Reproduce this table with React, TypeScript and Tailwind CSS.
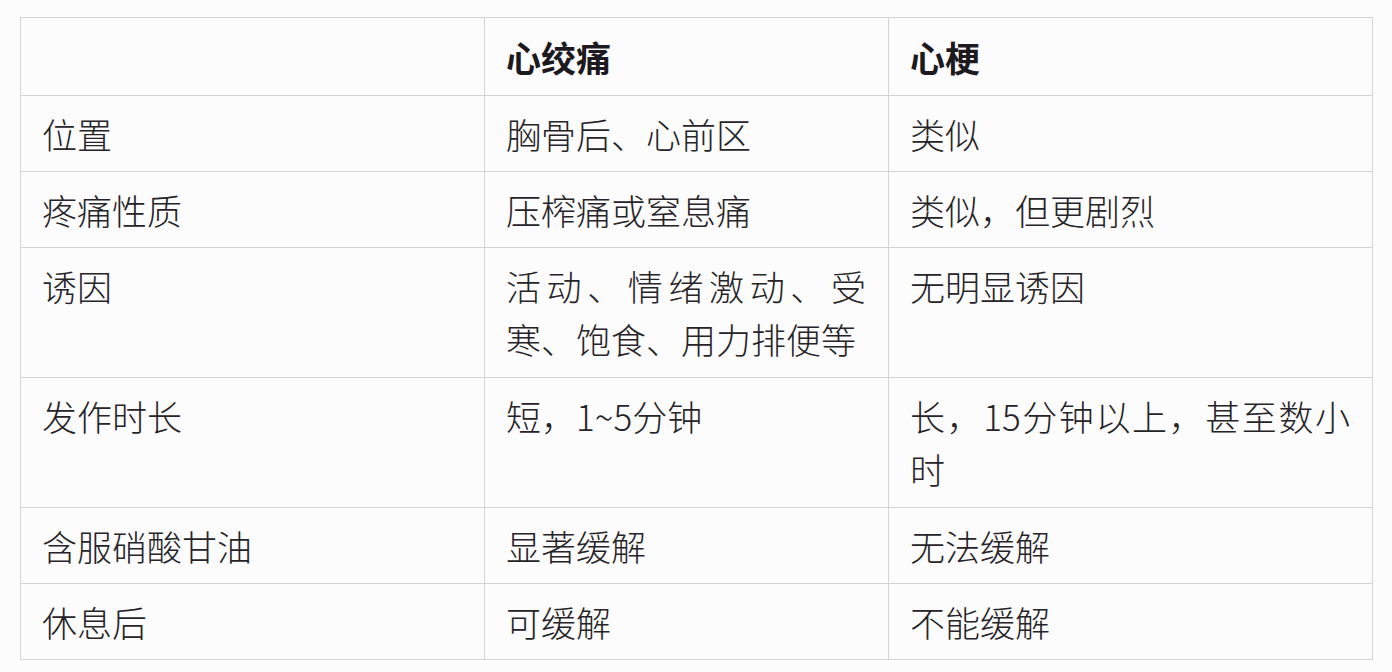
const rows = [
  { label: '位置', a: '胸骨后、心前区', b: '类似', tall: false },
  { label: '疼痛性质', a: '压榨痛或窒息痛', b: '类似，但更剧烈', tall: false },
  { label: '诱因', a: '活动、情绪激动、受寒、饱食、用力排便等', b: '无明显诱因', tall: true },
  { label: '发作时长', a: '短，1~5分钟', b: '长，15分钟以上，甚至数小时', tall: true },
  { label: '含服硝酸甘油', a: '显著缓解', b: '无法缓解', tall: false },
  { label: '休息后', a: '可缓解', b: '不能缓解', tall: false },
];

const cell =
  'border border-[#d3d3d8] pl-[21px] pr-[22px] align-top text-justify leading-[53px]';

export default function App() {
  return (
    <div
      lang="zh-CN"
      className="w-[1392px] h-[672px] overflow-hidden bg-[#fdfcfd] pt-[17px] pl-[20px] text-[35px] font-light text-[#262428]"
      style={{ fontFamily: '"Noto Sans CJK SC", "Noto Sans", sans-serif' }}
    >
      <table className="table-fixed border-collapse w-[1352px]">
        <colgroup>
          <col className="w-[464px]" />
          <col className="w-[404px]" />
          <col className="w-[484px]" />
        </colgroup>
        <thead>
          <tr className="h-[78px]">
            <th className={`${cell} py-[12px] text-left font-bold text-[#1c1a1e]`}></th>
            <th className={`${cell} py-[12px] text-left font-bold text-[#1c1a1e]`}>心绞痛</th>
            <th className={`${cell} py-[12px] text-left font-bold text-[#1c1a1e]`}>心梗</th>
          </tr>
        </thead>
        <tbody>
          {rows.map((r) => (
            <tr key={r.label} className={r.tall ? 'h-[130px]' : 'h-[76px]'}>
              <td className={`${cell} py-[11px]`}>{r.label}</td>
              <td className={`${cell} py-[11px]`}>{r.a}</td>
              <td className={`${cell} py-[11px]`}>{r.b}</td>
            </tr>
          ))}
        </tbody>
      </table>
    </div>
  );
}
